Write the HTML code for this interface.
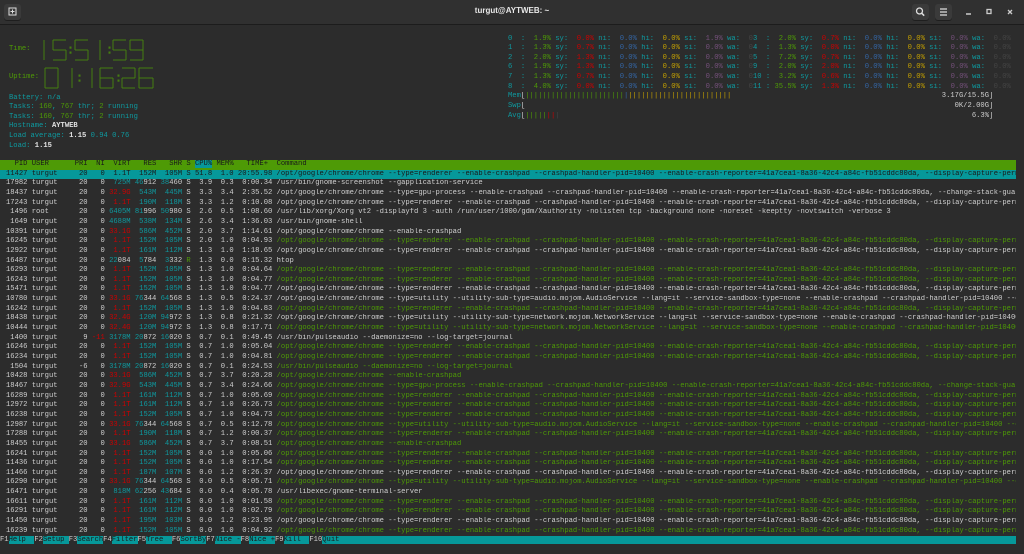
<!DOCTYPE html>
<html><head><meta charset="utf-8"><style>
html,body{margin:0;padding:0;width:1024px;height:554px;overflow:hidden;background:#2c2c2c;}
body{font-family:"Liberation Mono",monospace;color:#cfcfcf;position:relative;}
#tb{position:absolute;left:0;top:0;width:1024px;height:24px;background:#303030;border-bottom:1px solid #1c1c1c;}
#title{position:absolute;left:0;width:1024px;top:6px;text-align:center;font:bold 8px "Liberation Sans",sans-serif;color:#e8e8e8;}
.btn{position:absolute;top:4px;width:17px;height:16px;background:#3a3a3a;border-radius:3px;box-shadow:0 1px 0 #1e1e1e;}
.l{position:absolute;left:6px;white-space:pre;font-size:7.17px;line-height:9.65px;height:9.65px;width:1010px;overflow:hidden;}
.m{position:absolute;white-space:pre;font-size:7.17px;line-height:9.65px;overflow:hidden;}
.c{color:#0e9aa0}.g{color:#4e9a06}.r{color:#cc0000}.b{color:#3465a4}.y{color:#c4a000}.p{color:#75507b}.d{color:#444}.w{color:#e0e0e0;font-weight:bold}
.hdr{background:#4e9a06;color:#1a1a1a}
.sel{background:#06989a;color:#1a1a1a}
.k{background:#06989a;color:#1a1a1a}
</style></head><body>
<div id="tb">
 <div class="btn" style="left:4px"><svg width="17" height="16"><rect x="5" y="4" width="7" height="7" fill="none" stroke="#ddd" stroke-width="1"/><path d="M8.5 5.5v4M6.5 7.5h4" stroke="#ddd"/></svg></div>
 <div id="title">turgut@AYTWEB: ~</div>
 <div class="btn" style="left:912px"><svg width="17" height="16"><circle cx="7.5" cy="7" r="3" fill="none" stroke="#ddd" stroke-width="1.3"/><path d="M9.7 9.2l2.5 2.5" stroke="#ddd" stroke-width="1.5"/></svg></div>
 <div class="btn" style="left:935px"><svg width="17" height="16"><path d="M5 5h7M5 8h7M5 11h7" stroke="#ddd" stroke-width="1.2"/></svg></div>
 <svg style="position:absolute;left:963px;top:6px" width="60" height="12"><path d="M3 8h5" stroke="#ccc" stroke-width="1.5"/><rect x="24" y="3.5" width="4" height="4" fill="none" stroke="#ccc" stroke-width="1.3"/><path d="M45 4l4 4M49 4l-4 4" stroke="#ccc" stroke-width="1.3"/></svg>
</div>
<svg id="clk" style="position:absolute;left:0;top:0" width="170" height="95"></svg>
<div id="root"></div>
<script>
const R=document.getElementById('root');
function add(cls,style,html){const d=document.createElement('div');d.className=cls;d.setAttribute('style',style);d.innerHTML=html;R.appendChild(d);}
const s=(c,t)=>`<span class="${c}">${t}</span>`;
const SEG={'0':'abcdef','1':'bc','2':'abged','5':'afgcd','6':'afgedc','9':'abcdfg'};
let sv='';
function dig(ch,x,y,w,h){const m=y+h/2;const L={a:[x,y,x+w,y],b:[x+w,y,x+w,m],c:[x+w,m,x+w,y+h],d:[x,y+h,x+w,y+h],e:[x,m,x,y+h],f:[x,y,x,m],g:[x,m,x+w,m]};
 for(const k of SEG[ch]){const p=L[k];sv+=`<line x1="${p[0]}" y1="${p[1]}" x2="${p[2]}" y2="${p[3]}"/>`;}}
function col(x,y,h){sv+=`<rect x="${x}" y="${y+h*0.35}" width="1" height="1.2"/><rect x="${x}" y="${y+h*0.6}" width="1" height="1.2"/>`;}
const ty=40,th=20;
dig('1',30,ty,14,th);dig('5',53,ty,13,th);col(70,ty,th);dig('5',75,ty,13,th);dig('1',86,ty,14,th);col(109,ty,th);dig('5',113,ty,13,th);dig('9',130,ty,13,th);
const uy=68,uh=20;
dig('0',45,uy,13,uh);dig('1',58,uy,14,uh);col(79,uy,uh);dig('1',78,uy,14,uh);dig('6',100,uy,13,uh);col(118,uy,uh);dig('2',122,uy,13,uh);dig('6',139,uy,14,uh);
document.getElementById('clk').innerHTML=`<g stroke="#4e9a06" stroke-width="1" fill="#4e9a06" opacity="0.75">${sv}</g>`;
add('m','left:9px;top:45px',s('g','Time:'));
add('m','left:9px;top:73px',s('g','Uptime:'));
const LT=93.5;const LH=9.65;
const left=[
 s('c','Battery: n/a'),
 s('c','Tasks: ')+s('g','160')+s('c',', ')+s('g','767')+s('c',' thr; ')+s('g','2')+s('c',' running'),
 s('c','Tasks: ')+s('g','160')+s('c',', ')+s('g','767')+s('c',' thr; ')+s('g','2')+s('c',' running'),
 s('c','Hostname: ')+s('w','AYTWEB'),
 s('c','Load average: ')+s('w','1.15 ')+s('c','0.94 0.76'),
 s('c','Load: ')+s('w','1.15')];
left.forEach((t,i)=>add('m',`left:9px;top:${LT+i*LH}px`,t));
function cpu(id,u,sy,ni,hi,si,wa){const p=(v)=>v.padStart(5);return s('c',id.padEnd(3)+': ')+s('g',p(u))+s('c',' sy: ')+s('r',p(sy))+s('c',' ni: ')+s('b',p(ni))+s('c',' hi: ')+s('y',p(hi))+s('c',' si: ')+s('p',p(si))+s('c',' wa: ')+s('d',p(wa));}
const cl=[['0','1.9%','0.0%','0.0%','0.0%','1.9%','0.0%'],['1','1.3%','0.7%','0.0%','0.0%','0.0%','0.0%'],['2','2.0%','1.3%','0.0%','0.0%','0.0%','0.0%'],['6','1.9%','1.3%','0.0%','0.0%','0.0%','0.0%'],['7','1.3%','0.7%','0.0%','0.0%','0.0%','0.0%'],['8','4.0%','0.0%','0.0%','0.0%','0.0%','0.0%']];
const cr=[['3','2.0%','0.7%','0.0%','0.0%','0.0%','0.0%'],['4','1.3%','0.0%','0.0%','0.0%','0.0%','0.0%'],['5','7.2%','0.7%','0.0%','0.0%','0.0%','0.0%'],['9','2.0%','2.0%','0.0%','0.0%','0.0%','0.0%'],['10','3.2%','0.6%','0.0%','0.0%','0.0%','0.0%'],['11','35.5%','1.3%','0.0%','0.0%','0.0%','0.0%']];
const CT=34.5;
cl.forEach((a,i)=>add('m',`left:508px;top:${CT+i*LH}px;width:245px`,cpu(...a)));
cr.forEach((a,i)=>add('m',`left:753px;top:${CT+i*LH}px;width:263px`,cpu(...a)));
const bar=(n,c)=>s(c,'|'.repeat(n));
let mem=s('c','Mem')+'['+bar(23,'g')+bar(1,'b')+bar(24,'y');let ml='3.17G/15.5G]';
add('m',`left:508px;top:${CT+6*LH}px;width:490px`,mem+' '.repeat(113-4-48-ml.length)+ml);
add('m',`left:508px;top:${CT+7*LH}px;width:490px`,s('c','Swp')+'['+' '.repeat(113-4-9)+'0K/2.00G]');
add('m',`left:508px;top:${CT+8*LH}px;width:490px`,s('c','Avg')+'['+bar(5,'g')+bar(2,'r')+bar(1,'d')+' '.repeat(113-4-8-5)+'6.3%]');
const HT=160;
add('l hdr',`top:${HT}px;left:0;padding-left:6px;width:1010px`,'  PID USER      PRI  NI  VIRT   RES   SHR S <span style="background:#06989a">CPU%</span> MEM%   TIME+  Command');
const rend='/opt/google/chrome/chrome --type=renderer --enable-crashpad --crashpad-handler-pid=10400 --enable-crash-reporter=41a7cea1-8a36-42c4-a84c-fb51cddc80da, --display-capture-permissions-policy-allowed';
const gpu='/opt/google/chrome/chrome --type=gpu-process --enable-crashpad --crashpad-handler-pid=10400 --enable-crash-reporter=41a7cea1-8a36-42c4-a84c-fb51cddc80da, --change-stack-guard-on-fork';
const ec='/opt/google/chrome/chrome --enable-crashpad';
const aud='/opt/google/chrome/chrome --type=utility --utility-sub-type=audio.mojom.AudioService --lang=it --service-sandbox-type=none --enable-crashpad --crashpad-handler-pid=10400 --enable';
const net='/opt/google/chrome/chrome --type=utility --utility-sub-type=network.mojom.NetworkService --lang=it --service-sandbox-type=none --enable-crashpad --crashpad-handler-pid=10400 --enable';
const xorg='/usr/lib/xorg/Xorg vt2 -displayfd 3 -auth /run/user/1000/gdm/Xauthority -nolisten tcp -background none -noreset -keeptty -novtswitch -verbose 3';
const pa='/usr/bin/pulseaudio --daemonize=no --log-target=journal';
const P=[
['11427','turgut','20','0','1.1T','152M','105M','S','51.8','1.0','20:55.98',rend,0],
['17982','turgut','20','0','725M','46912','38460','S','3.9','0.3','0:00.34','/usr/bin/gnome-screenshot --gapplication-service',0],
['18437','turgut','20','0','32.9G','543M','445M','S','3.3','3.4','2:35.52',gpu,0],
['17243','turgut','20','0','1.1T','190M','118M','S','3.3','1.2','0:10.08',rend,0],
['1496','root','20','0','6405M','81996','50980','S','2.6','0.5','1:08.60',xorg,0],
['1649','turgut','20','0','4688M','538M','134M','S','2.6','3.4','1:36.03','/usr/bin/gnome-shell',0],
['10391','turgut','20','0','33.1G','586M','452M','S','2.0','3.7','1:14.61',ec,0],
['16245','turgut','20','0','1.1T','152M','105M','S','2.0','1.0','0:04.93',rend,1],
['12922','turgut','20','0','1.1T','161M','112M','S','1.3','1.0','1:18.65',rend,0],
['16487','turgut','20','0','22084','5784','3332','R','1.3','0.0','0:15.32','htop',0],
['16293','turgut','20','0','1.1T','152M','105M','S','1.3','1.0','0:04.64',rend,1],
['16243','turgut','20','0','1.1T','152M','105M','S','1.3','1.0','0:04.77',rend,1],
['15471','turgut','20','0','1.1T','152M','105M','S','1.3','1.0','0:04.77',rend,0],
['10780','turgut','20','0','33.1G','76344','64568','S','1.3','0.5','0:24.37',aud,0],
['16242','turgut','20','0','1.1T','152M','105M','S','1.3','1.0','0:04.83',rend,1],
['18438','turgut','20','0','32.4G','120M','94972','S','1.3','0.8','0:21.32',net,0],
['10444','turgut','20','0','32.4G','120M','94972','S','1.3','0.8','0:17.71',net,1],
['1400','turgut','9','-11','3178M','20872','16020','S','0.7','0.1','0:49.45',pa,0],
['16246','turgut','20','0','1.1T','152M','105M','S','0.7','1.0','0:05.04',rend,1],
['16234','turgut','20','0','1.1T','152M','105M','S','0.7','1.0','0:04.81',rend,1],
['1504','turgut','-6','0','3178M','20872','16020','S','0.7','0.1','0:24.53',pa,1],
['10428','turgut','20','0','33.1G','586M','452M','S','0.7','3.7','0:20.28',ec,1],
['18467','turgut','20','0','32.9G','543M','445M','S','0.7','3.4','0:24.66',gpu,1],
['16289','turgut','20','0','1.1T','161M','112M','S','0.7','1.0','0:05.69',rend,1],
['12972','turgut','20','0','1.1T','161M','112M','S','0.7','1.0','0:26.73',rend,1],
['16238','turgut','20','0','1.1T','152M','105M','S','0.7','1.0','0:04.73',rend,1],
['12987','turgut','20','0','33.1G','76344','64568','S','0.7','0.5','0:12.78',aud,1],
['17288','turgut','20','0','1.1T','190M','118M','S','0.7','1.2','0:00.37',rend,1],
['18455','turgut','20','0','33.1G','586M','452M','S','0.7','3.7','0:08.51',ec,1],
['16241','turgut','20','0','1.1T','152M','105M','S','0.0','1.0','0:05.06',rend,1],
['11436','turgut','20','0','1.1T','152M','105M','S','0.0','1.0','0:17.54',rend,1],
['11466','turgut','20','0','1.1T','187M','107M','S','0.0','1.2','0:26.37',rend,0],
['16290','turgut','20','0','33.1G','76344','64568','S','0.0','0.5','0:05.71',aud,1],
['16471','turgut','20','0','818M','62256','43684','S','0.0','0.4','0:05.78','/usr/libexec/gnome-terminal-server',0],
['16611','turgut','20','0','1.1T','161M','112M','S','0.0','1.0','0:01.58',rend,1],
['16291','turgut','20','0','1.1T','161M','112M','S','0.0','1.0','0:02.79',rend,1],
['11450','turgut','20','0','1.1T','195M','103M','S','0.0','1.2','0:23.95',rend,0],
['16239','turgut','20','0','1.1T','152M','105M','S','0.0','1.0','0:04.92',rend,1]];
function num(v,sel){v=v.padStart(5);if(sel)return v;if(/[GT]$/.test(v))return s('r',v);if(/M$/.test(v))return s('c',v);const t=v.trim();if(t.length>3){const k=t.length-3;return ' '.repeat(5-t.length)+s('c',t.slice(0,k))+t.slice(k);}return v;}
P.forEach((a,i)=>{const sel=i==0;const [pid,u,pri,ni,vi,re,sh,st,c,m,t,cmd,g]=a;
 let h=pid.padStart(5)+' '+u.padEnd(9)+' '+pri.padStart(3)+' '+(!sel&&ni.startsWith('-')?s('r',ni.padStart(3)):ni.padStart(3))+' '+num(vi,sel)+' '+num(re,sel)+' '+num(sh,sel)+' '+(st=='R'&&!sel?s('g',st):st)+' '+c.padStart(4)+' '+m.padStart(4)+' '+t.padStart(8)+' '+(g&&!sel?s('g',cmd):cmd);
 add('l'+(sel?' sel':''),`top:${HT+(i+1)*LH}px;left:0;padding-left:6px;width:1010px`,h);});
const F=[['F1','Help  '],['F2','Setup '],['F3','Search'],['F4','Filter'],['F5','Tree  '],['F6','SortBy'],['F7','Nice -'],['F8','Nice +'],['F9','Kill  '],['F10','Quit']];
let f='';F.forEach(([k,l],i)=>{f+=k+s('k',i==9?l+' '.repeat(200):l);});
add('l',`top:${HT+39*LH}px;left:0;padding-left:0;width:1016px`,f);
</script>
</body></html>
